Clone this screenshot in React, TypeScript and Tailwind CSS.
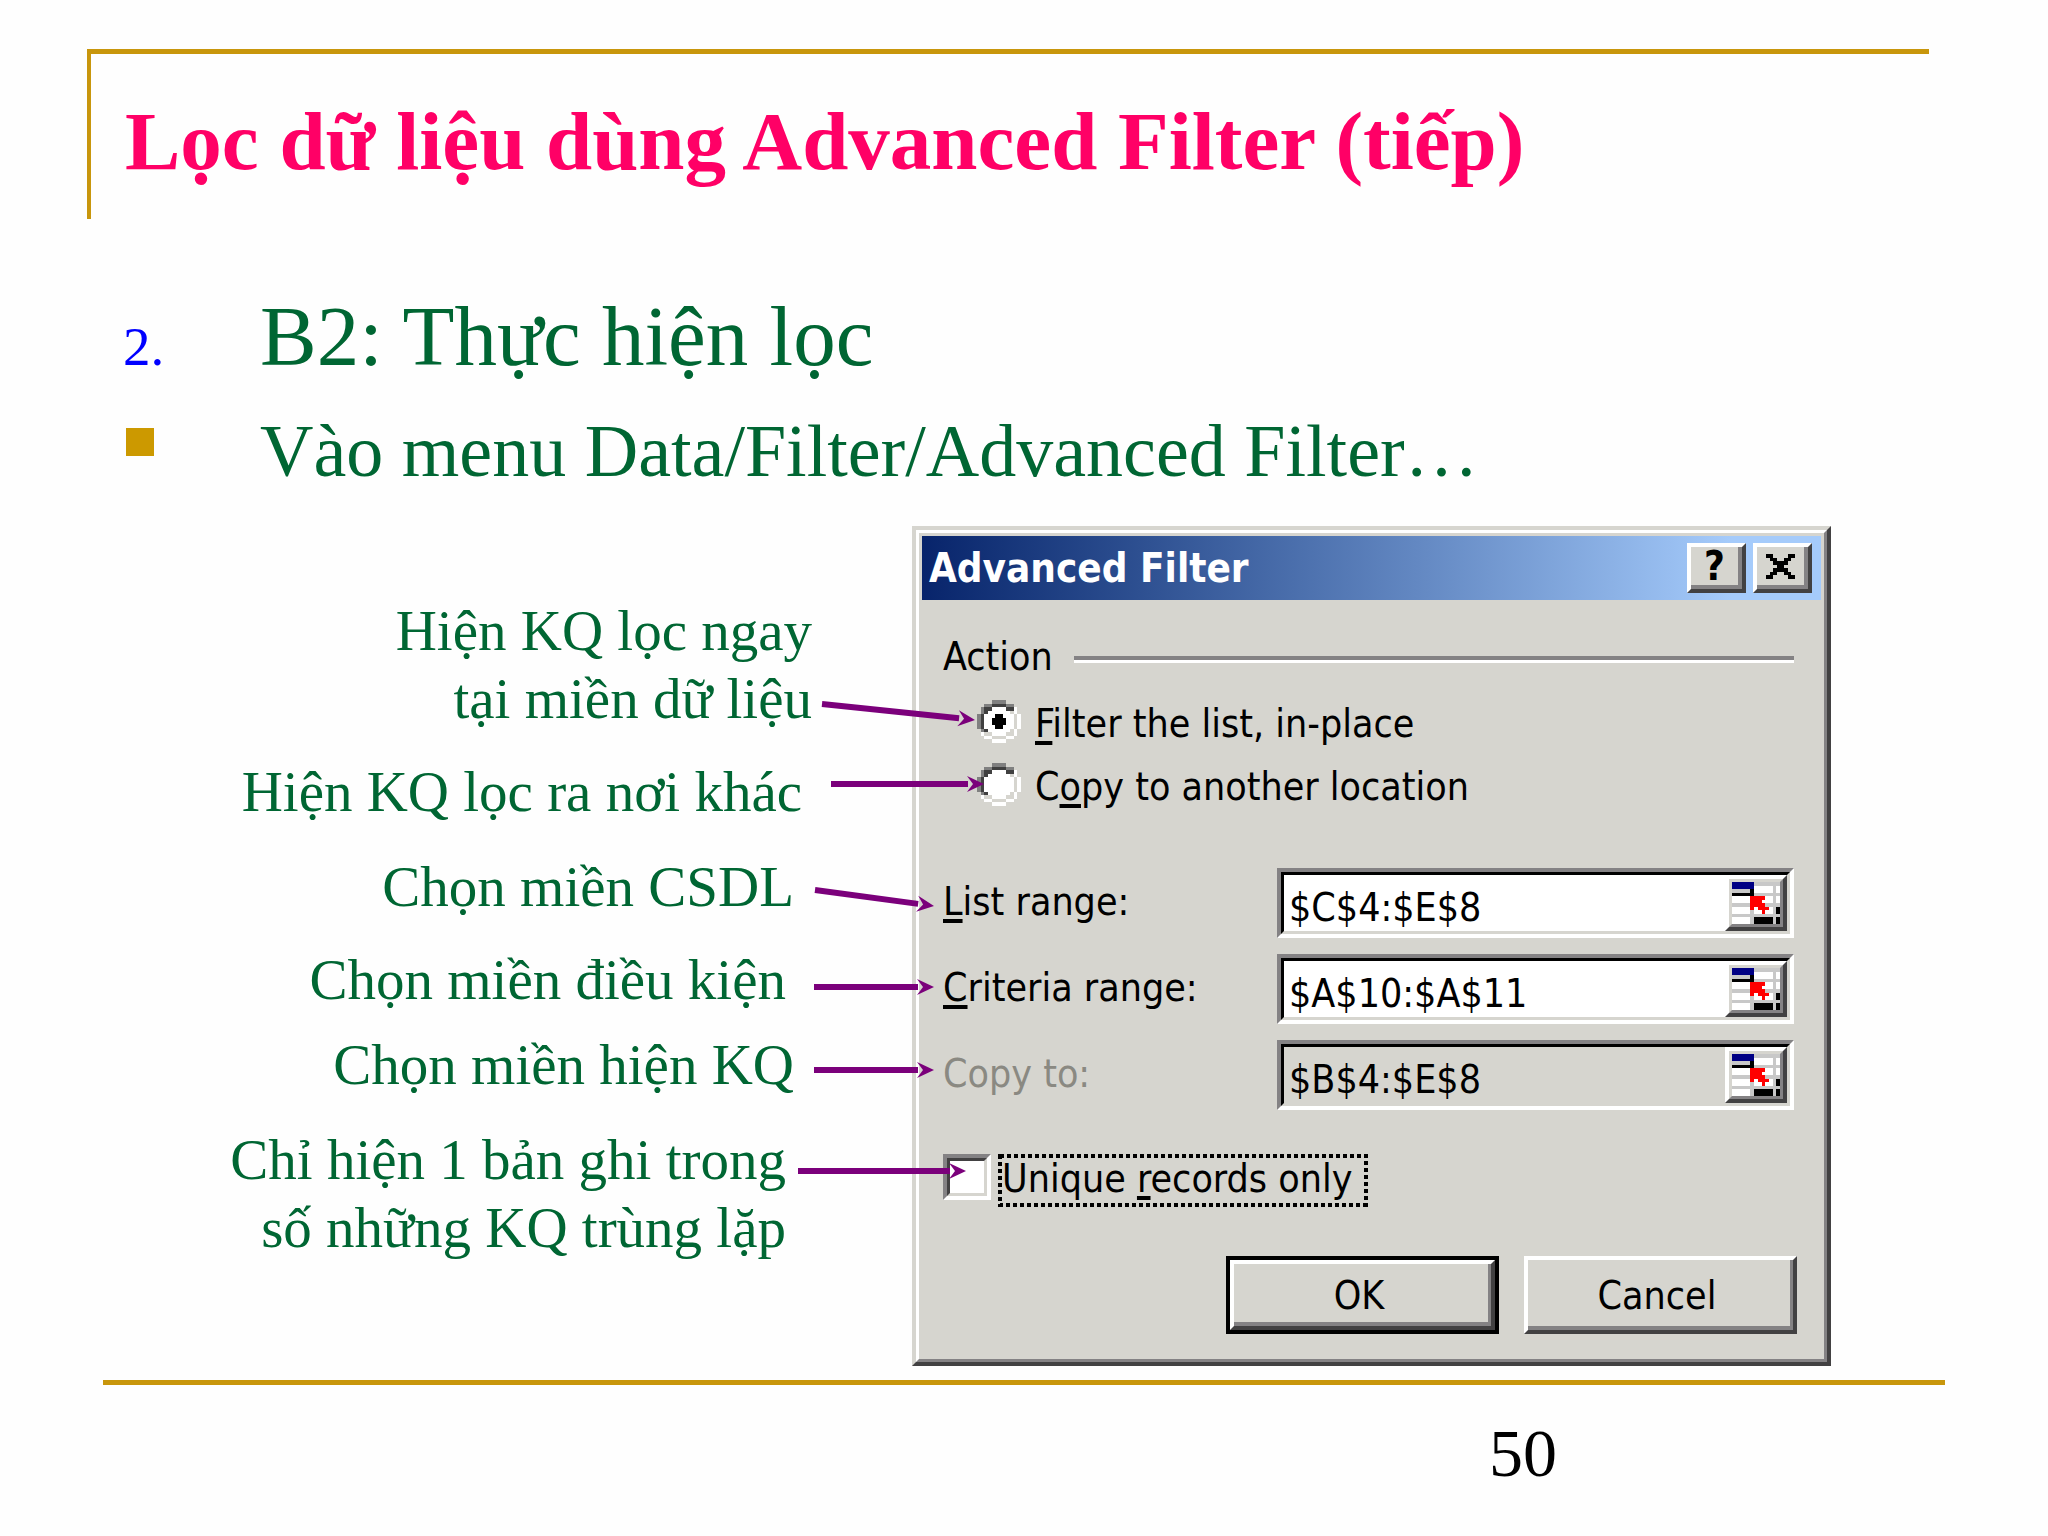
import type { ReactNode } from 'react';

const PIXEL_COLORS: Record<string, string> = {
  k: '#000000',
  d: '#404040',
  s: '#808080',
  l: '#d6d5cf',
  g: '#c8c8c8',
  w: '#ffffff',
  b: '#000084',
  r: '#ff0000',
};

const RADIO_RING = [
  '....ssss....',
  '..ssddddss..',
  '.sddwwwwddw.',
  '.sdwwwwwwlw.',
  'sdwwwwwwwwlw',
  'sdwwwwwwwwlw',
  'sdwwwwwwwwlw',
  'sdwwwwwwwwlw',
  '.sdwwwwwwlw.',
  '.wllwwwwllw.',
  '..wwllllww..',
  '....wwww....',
];

const RADIO_DOT = [
  '............',
  '............',
  '............',
  '............',
  '.....kk.....',
  '....kkkk....',
  '....kkkk....',
  '.....kk.....',
];

const CLOSE_ICON = ['kk....kk', '.kk..kk.', '..kkkk..', '...kk...', '..kkkk..', '.kk..kk.', 'kk....kk'];

const RANGE_ICON = [
  'bbbbbbggggggg',
  'bbbbbbwwwwwgw',
  'gggggkwwwwwgw',
  'kkkkkkggggggg',
  'wwwwwrrrrwwgw',
  'wwwwwrrrwwwgw',
  'gggggrrrrgggg',
  'wwwwwrwrrrwgk',
  'wwwwwgwwrwwgk',
  'ggggggggggggg',
  'wwwwwgkkkkkgk',
  'wwwwwgkkkkkgk',
];

function Pixels({ rows }: { rows: string[] }) {
  return (
    <>
      {rows.flatMap((row, y) =>
        [...row].map((c, x) =>
          c === '.' ? null : <rect key={`${x}-${y}`} x={x} y={y} width={1} height={1} fill={PIXEL_COLORS[c]} />,
        ),
      )}
    </>
  );
}

function Radio({ id, defaultChecked, children }: { id: string; defaultChecked?: boolean; children: ReactNode }) {
  return (
    <div className="flex items-start gap-[14px]">
      <span className="relative h-[43px] w-[44px]">
        <input
          id={id}
          type="radio"
          name="action"
          defaultChecked={defaultChecked}
          className="peer absolute inset-0 h-full w-full appearance-none"
        />
        <svg
          viewBox="0 0 12 12"
          preserveAspectRatio="none"
          shapeRendering="crispEdges"
          className="pointer-events-none absolute inset-0 h-full w-full"
        >
          <Pixels rows={RADIO_RING} />
        </svg>
        <svg
          viewBox="0 0 12 12"
          preserveAspectRatio="none"
          shapeRendering="crispEdges"
          className="pointer-events-none absolute inset-0 hidden h-full w-full peer-checked:block"
        >
          <Pixels rows={RADIO_DOT} />
        </svg>
      </span>
      <label htmlFor={id}>{children}</label>
    </div>
  );
}

function Key({ children }: { children: ReactNode }) {
  return <u className="decoration-[4px] underline-offset-[4px] [text-decoration-skip-ink:none]">{children}</u>;
}

function RangeRow({
  id,
  label,
  value,
  disabled,
}: {
  id: string;
  label: ReactNode;
  value: string;
  disabled?: boolean;
}) {
  return (
    <div className="flex items-center">
      <label
        htmlFor={id}
        className={disabled ? 'w-[334px] shrink-0 pb-[2px] text-[#8a8982]' : 'w-[334px] shrink-0 pb-[2px]'}
      >
        {label}
      </label>
      <div className="min-w-0 flex-1 border-[4px] border-b-white border-l-[#848284] border-r-white border-t-[#848284]">
        <div
          className={
            disabled
              ? 'flex h-[62px] border-[3px] border-b-[#d6d5cf] border-l-black border-r-[#d6d5cf] border-t-black bg-[#d6d5cf]'
              : 'flex h-[62px] border-[3px] border-b-[#d6d5cf] border-l-black border-r-[#d6d5cf] border-t-black bg-white'
          }
        >
          <input
            id={id}
            type="text"
            defaultValue={value}
            readOnly={disabled}
            className="min-w-0 flex-1 bg-transparent pl-[5px] pt-[10px] outline-none"
          />
          <button
            type="button"
            aria-label="Collapse dialog"
            className="w-[62px] shrink-0 border-[4px] border-b-[#424142] border-l-white border-r-[#424142] border-t-white bg-[#c8c8c8]"
          >
            <span className="block h-full border-[3px] border-b-[#848284] border-l-[#d6d5cf] border-r-[#848284] border-t-[#d6d5cf]">
              <svg viewBox="0 0 13 12" preserveAspectRatio="none" shapeRendering="crispEdges" className="h-full w-full">
                <Pixels rows={RANGE_ICON} />
              </svg>
            </span>
          </button>
        </div>
      </div>
    </div>
  );
}

function PushButton({ children, isDefault }: { children: ReactNode; isDefault?: boolean }) {
  return (
    <button
      type="button"
      className={
        isDefault
          ? 'h-[78px] w-[273px] border-[4px] border-black'
          : 'h-[78px] w-[273px]'
      }
    >
      <span className="block h-full border-[4px] border-b-[#424142] border-l-white border-r-[#424142] border-t-white">
        <span className="flex h-full items-center justify-center border-b-[4px] border-r-[3px] border-[#848284] pr-1 pt-[6px]">
          {children}
        </span>
      </span>
    </button>
  );
}

function TitleButton({ label, children }: { label: string; children: ReactNode }) {
  return (
    <button
      type="button"
      aria-label={label}
      className="h-[50px] w-[59px] border-[4px] border-b-[#424142] border-l-white border-r-[#424142] border-t-white bg-[#d6d5cf]"
    >
      <span className="flex h-full items-center justify-center border-b-[4px] border-r-[4px] border-[#848284]">
        {children}
      </span>
    </button>
  );
}

function Arrow({ x1, y1, x2, y2 }: { x1: number; y1: number; x2: number; y2: number }) {
  const length = Math.hypot(x2 - x1, y2 - y1);
  const angle = (Math.atan2(y2 - y1, x2 - x1) * 180) / Math.PI;
  return (
    <g transform={`translate(${x2} ${y2}) rotate(${angle})`} fill="#7b007b">
      <rect x={-length} y={-3} width={length - 16} height={6} />
      <path d="M0 0L-17 -8L-11 0L-17 8Z" />
    </g>
  );
}

function Dialog() {
  return (
    <div className="border-[4px] border-b-[#424142] border-l-[#d6d5cf] border-r-[#424142] border-t-[#d6d5cf]">
      <div className="border-[3px] border-b-[#848284] border-l-white border-r-[#848284] border-t-white bg-[#d6d5cf] p-[3px] font-['DejaVu_Sans_Condensed','DejaVu_Sans',sans-serif] text-[39px] leading-[48px] text-black">
        <div className="flex h-[64px] items-center bg-linear-to-r from-[#08246b] to-[#a5cbfb] to-90% pl-[7px] pr-[9px]">
          <h2 className="flex-1 text-[40px] font-bold text-white">Advanced Filter</h2>
          <div className="flex gap-[7px]">
            <TitleButton label="Help">
              <span className="text-[40px] font-bold leading-[40px]">?</span>
            </TitleButton>
            <TitleButton label="Close">
              <svg viewBox="0 0 8 7" preserveAspectRatio="none" shapeRendering="crispEdges" className="h-[25px] w-[29px]">
                <Pixels rows={CLOSE_ICON} />
              </svg>
            </TitleButton>
          </div>
        </div>

        <div className="pb-[22px] pl-[21px] pr-[24px] pt-[33px]">
          <div role="radiogroup" aria-labelledby="action-heading" className="pr-[3px]">
            <div className="flex items-center gap-[21px]">
              <span id="action-heading">Action</span>
              <span className="mt-1 flex-1 border-b-[3px] border-t-[4px] border-b-white border-t-[#848284]" />
            </div>
            <div className="mt-[19px] flex flex-col gap-[15px] pl-[34px]">
              <Radio id="in-place" defaultChecked>
                <Key>F</Key>ilter the list, in-place
              </Radio>
              <Radio id="copy-location">
                C<Key>o</Key>py to another location
              </Radio>
            </div>
          </div>

          <div className="mt-[57px] flex flex-col gap-4 pr-[3px]">
            <RangeRow id="list-range" label={<><Key>L</Key>ist range:</>} value="$C$4:$E$8" />
            <RangeRow id="criteria-range" label={<><Key>C</Key>riteria range:</>} value="$A$10:$A$11" />
            <RangeRow id="copy-to" label="Copy to:" value="$B$4:$E$8" disabled />
          </div>

          <div className="mt-[44px] flex items-start gap-[7px]">
            <span className="border-[4px] border-b-white border-l-[#848284] border-r-white border-t-[#848284]">
              <input
                id="unique"
                type="checkbox"
                className="block h-[38px] w-[40px] appearance-none border-[3px] border-b-[#d6d5cf] border-l-[#424142] border-r-[#d6d5cf] border-t-[#424142] bg-white checked:bg-black"
              />
            </span>
            <label htmlFor="unique" className="relative pb-[4px] pl-1 pr-[15px] pt-px">
              Unique <Key>r</Key>ecords only
              <svg className="pointer-events-none absolute inset-0 h-full w-full" shapeRendering="crispEdges">
                <rect
                  x="2"
                  y="2"
                  className="h-[calc(100%-4px)] w-[calc(100%-4px)]"
                  fill="none"
                  stroke="#000"
                  strokeWidth="4"
                  strokeDasharray="4 3"
                />
              </svg>
            </label>
          </div>

          <div className="mt-[49px] flex justify-end gap-[25px]">
            <PushButton isDefault>OK</PushButton>
            <PushButton>Cancel</PushButton>
          </div>
        </div>
      </div>
    </div>
  );
}

export default function App() {
  return (
    <main className="min-h-screen bg-[#fefefe] pt-[49px] font-['Liberation_Serif','Times_New_Roman',serif]">
      <header className="ml-[87px] mr-[119px] border-l-[4px] border-t-[5px] border-[#c8960c] pb-[30px] pl-[34px] pt-[39px]">
        <h1 className="text-[83px] font-bold leading-[96px] text-[#ff0066]">Lọc dữ liệu dùng Advanced Filter (tiếp)</h1>
      </header>

      <ul className="ml-[123px] mt-[65px] flex flex-col gap-[11px] text-[#006633]">
        <li className="flex items-baseline text-[85px] leading-[104px]">
          <span className="w-[137px] text-[55px] leading-[60px] text-[#0000ff]">2.</span>
          <span>B2: Thực hiện lọc</span>
        </li>
        <li className="flex items-start text-[74px] leading-[104px]">
          <span className="w-[137px] pl-[3px] pt-[29px]">
            <span className="block h-[28px] w-[28px] bg-[#cc9900]" />
          </span>
          <span>Vào menu Data/Filter/Advanced Filter…</span>
        </li>
      </ul>

      <section className="mr-[217px] mt-[23px] grid grid-cols-[912fr_919fr]">
        <div className="min-w-0 text-right text-[57px] leading-[68px] text-[#006633]">
          <p className="mt-[71px] pr-[100px]">
            Hiện KQ lọc ngay
            <br />
            tại miền dữ liệu
          </p>
          <p className="mt-[25px] pr-[110px]">Hiện KQ lọc ra nơi khác</p>
          <p className="mt-[27px] pr-[118px]">Chọn miền CSDL</p>
          <p className="mt-[25px] pr-[126px]">Chọn miền điều kiện</p>
          <p className="mt-[17px] pr-[118px]">Chọn miền hiện KQ</p>
          <p className="mt-[27px] pr-[126px]">
            Chỉ hiện 1 bản ghi trong
            <br />
            số những KQ trùng lặp
          </p>
        </div>
        <div className="relative min-w-0">
          <Dialog />
          <svg
            viewBox="0 0 200 840"
            className="pointer-events-none absolute -left-[120px] top-0 h-[840px] w-[200px]"
            aria-hidden="true"
          >
            <Arrow x1={30} y1={178} x2={183} y2={194} />
            <Arrow x1={39} y1={258} x2={192} y2={258} />
            <Arrow x1={23} y1={364} x2={142} y2={380} />
            <Arrow x1={22} y1={461} x2={142} y2={461} />
            <Arrow x1={22} y1={544} x2={142} y2={544} />
            <Arrow x1={6} y1={645} x2={174} y2={645} />
          </svg>
        </div>
      </section>

      <footer className="mt-[14px]">
        <hr className="ml-[103px] mr-[103px] border-0 border-t-[5px] border-[#c8960c]" />
        <p className="mt-[28px] pr-[491px] text-right text-[68px] leading-[80px] text-black">50</p>
      </footer>
    </main>
  );
}
